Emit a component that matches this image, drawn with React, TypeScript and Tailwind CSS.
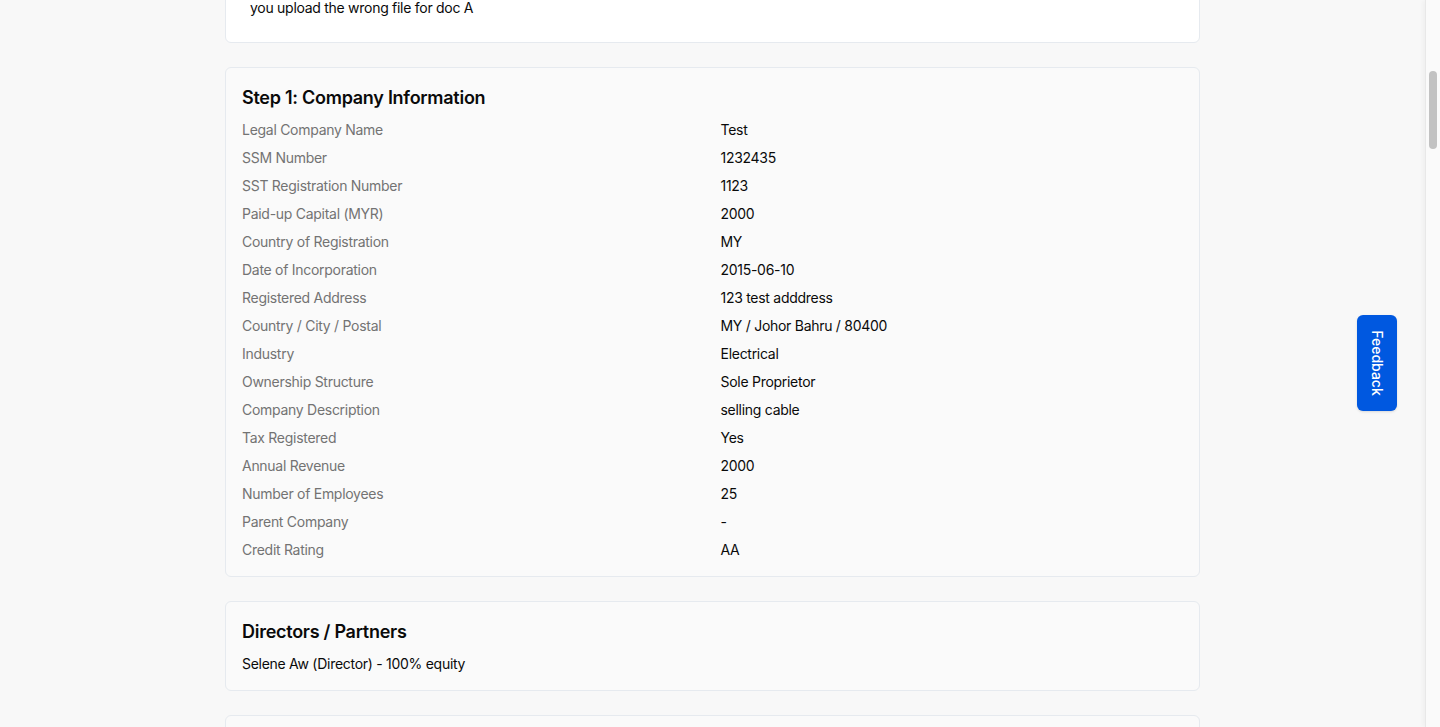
import React, { useLayoutEffect, useRef } from 'react';

const companyInfo: [string, string][] = [
    ['Legal Company Name', 'Test'],
    ['SSM Number', '1232435'],
    ['SST Registration Number', '1123'],
    ['Paid-up Capital (MYR)', '2000'],
    ['Country of Registration', 'MY'],
    ['Date of Incorporation', '2015-06-10'],
    ['Registered Address', '123 test adddress'],
    ['Country / City / Postal', 'MY / Johor Bahru / 80400'],
    ['Industry', 'Electrical'],
    ['Ownership Structure', 'Sole Proprietor'],
    ['Company Description', 'selling cable'],
    ['Tax Registered', 'Yes'],
    ['Annual Revenue', '2000'],
    ['Number of Employees', '25'],
    ['Parent Company', '-'],
    ['Credit Rating', 'AA'],
];

const Card: React.FC<{ title: string; children: React.ReactNode }> = ({ title, children }) => (
    <section className="bg-[#fafafa] border border-[#e6eaef] rounded-md p-4">
        <h2 className="text-lg leading-7 font-semibold tracking-[-0.015em] text-[#0a0a0a] mb-2">{title}</h2>
        {children}
    </section>
);

export default function App() {
    const scrollRef = useRef<HTMLDivElement>(null);
    const remarksRef = useRef<HTMLDivElement>(null);

    useLayoutEffect(() => {
        // keep the page scrolled so the remarks card ends near the top edge
        const box = scrollRef.current;
        const card = remarksRef.current;
        if (box && card) box.scrollTop = card.offsetTop + card.offsetHeight - 43;
    }, []);

    return (
        <div className="h-screen w-full flex bg-[#f8f8f8] text-sm tracking-[-0.02em] text-[#0a0a0a] overflow-hidden" style={{ fontFamily: 'Inter, "Noto Sans", sans-serif' }}>
            <div ref={scrollRef} className="relative flex-1 h-full overflow-hidden">
                <div className="w-[975px] ml-[225px] pt-8 pb-16 flex flex-col gap-6">
                    <div ref={remarksRef} className="bg-white border border-[#e6eaef] rounded-md p-6">
                        <h2 className="text-lg leading-7 font-semibold mb-2">Admin Remarks</h2>
                        <p className="leading-5">you upload the wrong file for doc A</p>
                    </div>

                    <Card title="Step 1: Company Information">
                        <div className="grid grid-cols-2 gap-x-4 gap-y-2 leading-5">
                            {companyInfo.map(([label, value]) => (
                                <React.Fragment key={label}>
                                    <div className="text-[#737373]">{label}</div>
                                    <div>{value}</div>
                                </React.Fragment>
                            ))}
                        </div>
                    </Card>

                    <Card title="Directors / Partners">
                        <p className="leading-5">Selene Aw (Director) - 100% equity</p>
                    </Card>

                    <Card title="Step 2: Documents">
                        <p className="leading-5 text-[#737373]">No documents uploaded</p>
                    </Card>
                </div>
            </div>

            {/* fake browser scrollbar */}
            <div className="w-[15px] h-full bg-[#fafafa] border-l border-[#e8e8e8] shadow-[-3px_0_4px_rgba(0,0,0,0.03)] flex justify-center">
                <div className="w-2 h-[78px] mt-[71px] rounded-full bg-[#c2c2c2]" />
            </div>

            <button className="absolute left-[1357px] top-[315px] w-10 h-24 bg-[#0058e0] rounded-md flex items-center justify-center shadow-sm">
                <span className="text-white text-sm font-medium tracking-normal rotate-90 whitespace-nowrap">Feedback</span>
            </button>
        </div>
    );
}
